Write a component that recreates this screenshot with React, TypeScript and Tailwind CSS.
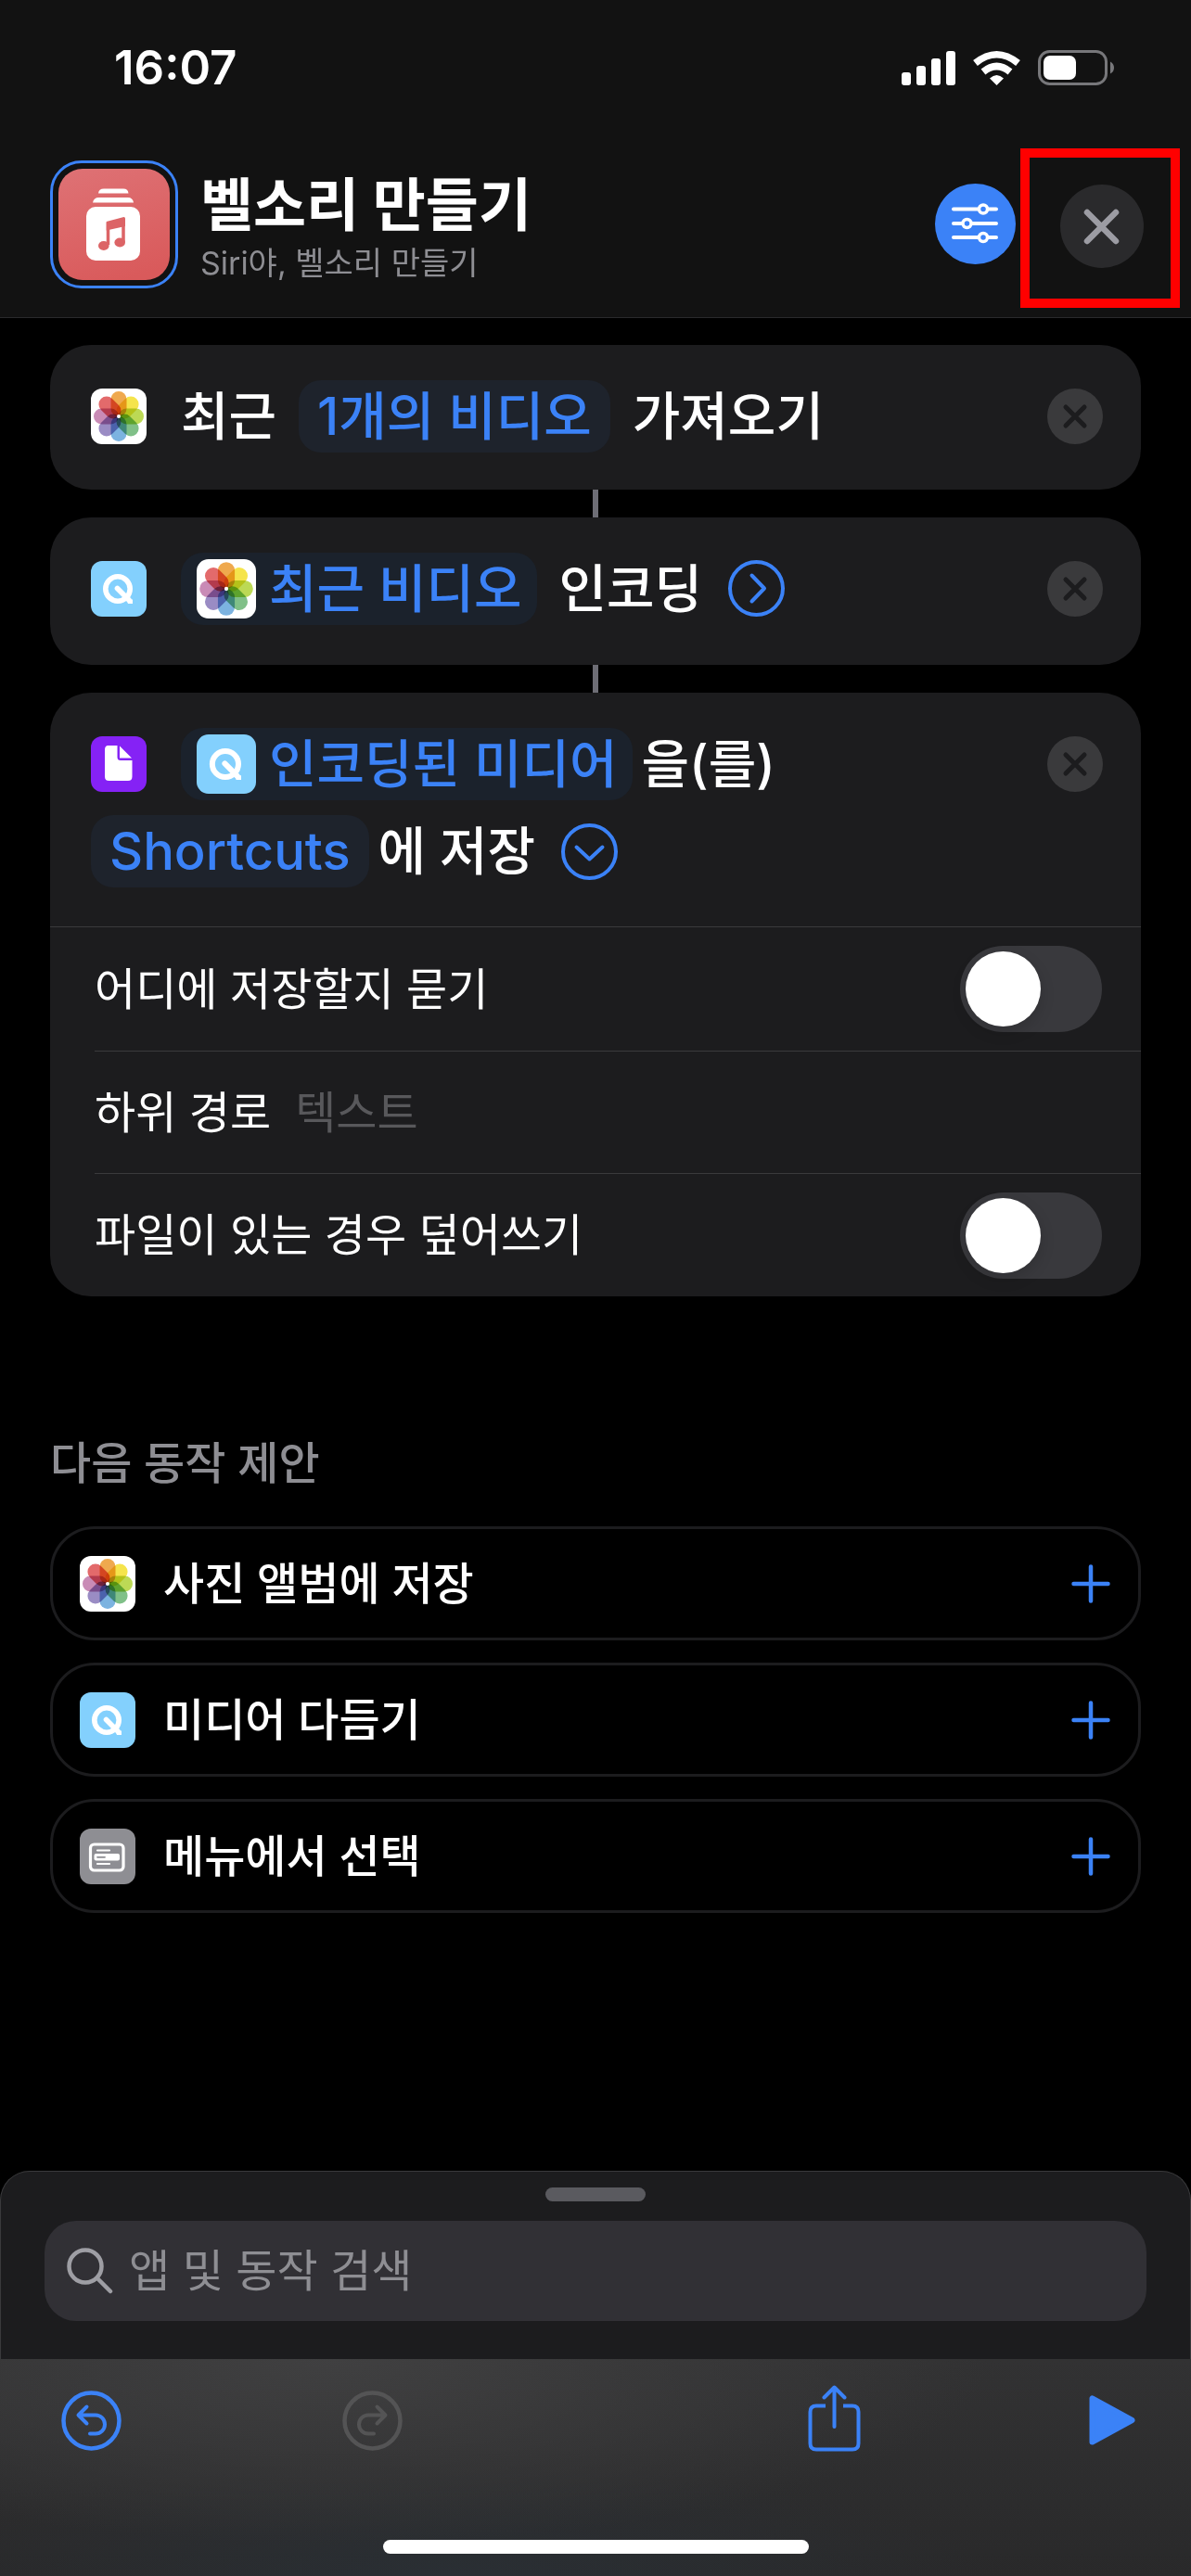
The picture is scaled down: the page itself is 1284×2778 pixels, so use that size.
import { useState } from "react";
import type { ReactNode } from "react";

const PETALS = [
  { angle: 0, color: "#efa94e" },
  { angle: 45, color: "#f5e44c" },
  { angle: 90, color: "#bcd955" },
  { angle: 135, color: "#80c088" },
  { angle: 180, color: "#7cb3e0" },
  { angle: 225, color: "#9a8cc4" },
  { angle: 270, color: "#c98bb6" },
  { angle: 315, color: "#e36a6b" },
];

const PhotosIcon = ({ className }: { className: string }) => (
  <svg viewBox="0 0 60 60" className={className} aria-hidden="true">
    <rect width="60" height="60" rx="12" fill="#fff" />
    <g className="isolate">
      {PETALS.map(({ angle, color }) => (
        <rect
          key={angle}
          x="21.5"
          y="3"
          width="17"
          height="27"
          rx="8.5"
          fill={color}
          transform={`rotate(${angle} 30 30)`}
          className="mix-blend-multiply"
        />
      ))}
    </g>
    <circle cx="30" cy="30" r="2" fill="#fff" />
  </svg>
);

const MediaIcon = ({ className }: { className: string }) => (
  <svg viewBox="0 0 60 60" className={className} fill="none" aria-hidden="true">
    <rect width="60" height="60" rx="12" fill="#83d0fd" />
    <circle cx="29" cy="30" r="13.2" stroke="#fff" strokeWidth="5.6" />
    <path d="M28.500 29.500L41 42" stroke="#fff" strokeWidth="5.6" strokeLinecap="round" />
    <path d="M38 41L45 41.500V46H40Z" fill="#fff" />
  </svg>
);

const FileIcon = ({ className }: { className: string }) => (
  <svg viewBox="0 0 60 60" className={className} aria-hidden="true">
    <rect width="60" height="60" rx="12" fill="#8522f5" />
    <path d="M18.500 10H28.500V22.500Q28.500 26 32 26H44.500V43.500Q44.500 48 40 48H19.500Q15 48 15 43.500V14.500Q15 10 18.500 10Z" fill="#fff" />
    <path d="M31 10.500L44 23.500H31Z" fill="#fff" />
  </svg>
);

const MenuIcon = ({ className }: { className: string }) => (
  <svg viewBox="0 0 60 60" className={className} fill="none" aria-hidden="true">
    <rect width="60" height="60" rx="12" fill="#8e8e93" />
    <rect x="11.500" y="17" width="35.500" height="28" rx="4" stroke="#fff" strokeWidth="3.200" />
    <path d="M19 23.500H32M19 38H32" stroke="#fff" strokeWidth="2.200" strokeLinecap="round" />
    <rect x="15.500" y="27" width="27.500" height="7.500" rx="2" fill="#fff" />
    <path d="M19 30.800H27" stroke="#8e8e93" strokeWidth="1.800" strokeLinecap="round" />
  </svg>
);

const RemoveButton = () => (
  <button type="button" aria-label="동작 제거" className="size-[60px] shrink-0 rounded-full bg-[#3a3a3c]">
    <svg viewBox="0 0 60 60" className="size-full" aria-hidden="true">
      <path d="M20 20L40 40M40 20L20 40" stroke="#1c1c1e" strokeWidth="5" strokeLinecap="round" />
    </svg>
  </button>
);

const DisclosureButton = ({ open }: { open: boolean }) => (
  <button type="button" aria-label="옵션" className="ml-[4px] size-[61px] shrink-0 text-[#3b82f7]">
    <svg
      viewBox="0 0 61 61"
      className="size-full"
      fill="none"
      stroke="currentColor"
      strokeWidth="4"
      strokeLinecap="round"
      strokeLinejoin="round"
      aria-hidden="true"
    >
      <circle cx="30.500" cy="30.500" r="28.500" />
      <path d={open ? "M16.500 25.500L30.500 38.500L44.500 25.500" : "M25.500 16.500L39 30.500L25.500 44.500"} />
    </svg>
  </button>
);

const Token = ({ icon, children }: { icon?: ReactNode; children: ReactNode }) => (
  <button
    type="button"
    className={`flex h-[78px] items-center rounded-[24px] text-[#3b82f7] ${
      icon ? "gap-[14px] bg-[#1b222c] pr-[16px] pl-[17px]" : "bg-[#1e232c] px-[20px]"
    }`}
  >
    {icon}
    {children}
  </button>
);

const Toggle = ({ id }: { id: string }) => {
  const [on, setOn] = useState(false);

  return (
    <input
      id={id}
      type="checkbox"
      role="switch"
      checked={on}
      onChange={() => setOn(!on)}
      className="h-[93px] w-[153px] shrink-0 appearance-none rounded-full bg-[#39393d] p-[6px] before:block before:size-[81px] before:rounded-full before:bg-white before:shadow-[0_6px_16px_rgba(0,0,0,0.15)] checked:bg-[#34c759] checked:before:ml-auto"
    />
  );
};

const Connector = () => <div className="mx-auto h-[30px] w-[6px] bg-[#6d6d75]" />;

const suggestions = [
  { label: "사진 앨범에 저장", Icon: PhotosIcon },
  { label: "미디어 다듬기", Icon: MediaIcon },
  { label: "메뉴에서 선택", Icon: MenuIcon },
];

const StatusBar = () => (
  <div className="flex items-center justify-between pr-[82px] pl-[123px]">
    <span className="font-['Inter'] text-[51px] leading-[60px] font-semibold">16:07</span>
    <svg viewBox="0 0 230 38" className="h-[38px] w-[230px]" aria-hidden="true">
      <g fill="#fff">
        <rect x="0" y="24" width="10" height="14" rx="3" />
        <rect x="16" y="17" width="10" height="21" rx="3" />
        <rect x="32" y="9" width="10" height="29" rx="3" />
        <rect x="48" y="1" width="10" height="37" rx="3" />
      </g>
      <g fill="none" stroke="#fff" strokeWidth="7.500">
        <path d="M79.500 14Q102.500 -4.500 125.500 14" />
        <path d="M88 23.500Q102.500 11.500 117 23.500" />
      </g>
      <path d="M95 30.500Q102.500 23.500 110 30.500L102.500 38Z" fill="#fff" />
      <rect x="148.500" y="1.500" width="72" height="35" rx="11" fill="none" stroke="#77777a" strokeWidth="3" />
      <rect x="153" y="6" width="35" height="26" rx="7" fill="#fff" />
      <path d="M225 12.500Q229 14.500 229 19Q229 23.500 225 25.500Z" fill="#77777a" />
    </svg>
  </div>
);

const Header = () => (
  <header className="border-b border-[#2a2a2c] bg-[#121212] pt-[43px] pb-[10px]">
    <StatusBar />
    <div className="mt-[57px] flex items-center pr-[12px] pl-[54px]">
      <div className="mb-[9px] size-[138px] shrink-0 rounded-[34px] border-[3px] border-[#3b82f7] p-[6px]">
        <svg viewBox="0 0 120 120" className="size-full" aria-hidden="true">
          <defs>
            <linearGradient id="ringtone" x1="0.300" y1="0" x2="0.600" y2="1">
              <stop offset="0" stopColor="#de7073" />
              <stop offset="1" stopColor="#d95a5b" />
            </linearGradient>
          </defs>
          <rect width="120" height="120" rx="26" fill="url(#ringtone)" />
          <g fill="#fff">
            <path d="M43 26.500Q43.500 21.500 49 21.500H70Q75 21.500 75.500 26.500Z" />
            <path d="M37 36.500Q38 31 43.500 31H75Q80 31 81 36.500Z" />
            <rect x="30" y="41" width="58" height="58" rx="10" />
          </g>
          <path d="M53.500 82V59.500L70 55.500V79" fill="none" stroke="#dc6466" strokeWidth="3.500" />
          <path d="M51.700 57L70.500 52Q72 52 72 54V62L51.700 66.500Z" fill="#dc6466" />
          <ellipse cx="48.800" cy="83" rx="5.800" ry="5" fill="#dc6466" />
          <ellipse cx="66.200" cy="79.500" rx="5.800" ry="5" fill="#dc6466" />
        </svg>
      </div>
      <div className="ml-[24px] flex-1">
        <h1 className="text-[62px] leading-[72px] font-bold">벨소리 만들기</h1>
        <p className="mt-[4px] text-[34px] leading-[44px] text-[#8e8e93]">Siri야, 벨소리 만들기</p>
      </div>
      <button
        type="button"
        aria-label="세부사항"
        className="mr-[5px] mb-[9px] size-[87px] rounded-full bg-[#3b82f7]"
      >
        <svg viewBox="0 0 87 87" className="size-full" fill="none" stroke="#fff" strokeWidth="4" strokeLinecap="round" aria-hidden="true">
          <path d="M20 27.500H66M20 43H66M20 58H66" />
          <g fill="#3b82f7" strokeWidth="3.500">
            <circle cx="52" cy="27.500" r="4.500" />
            <circle cx="34.500" cy="43" r="4.500" />
            <circle cx="52" cy="58" r="4.500" />
          </g>
        </svg>
      </button>
      <div className="flex size-[172px] items-center justify-center border-[10px] border-[#ff0000] pb-[4px] pl-[4px]">
        <button type="button" aria-label="닫기" className="size-[90px] rounded-full bg-[#2a2a2c]">
          <svg viewBox="0 0 90 90" className="size-full" aria-hidden="true">
            <path d="M29 30L60 61M60 30L29 61" stroke="#9c9ca3" strokeWidth="6.500" strokeLinecap="round" />
          </svg>
        </button>
      </div>
    </div>
  </header>
);

const App = () => (
  <div className="flex min-h-screen flex-col bg-black font-['Inter','Noto_Sans_CJK_KR',sans-serif] text-white">
    <Header />

    <main className="flex-1 px-[54px] pt-[29px] text-[56px] leading-[78px] font-medium">
      <section className="flex h-[156px] items-center rounded-[44px] bg-[#1c1c1e] pr-[41px] pb-[3px] pl-[44px]">
        <PhotosIcon className="size-[60px] shrink-0" />
        <div className="ml-[37px] flex flex-1 items-center gap-[24px]">
          최근 <Token>1개의 비디오</Token> 가져오기
        </div>
        <RemoveButton />
      </section>
      <Connector />

      <section className="flex h-[159px] items-center rounded-[44px] bg-[#1c1c1e] pr-[41px] pb-[6px] pl-[44px]">
        <MediaIcon className="size-[60px] shrink-0" />
        <div className="ml-[37px] flex flex-1 items-center gap-[24px]">
          <Token icon={<PhotosIcon className="size-[64px]" />}>최근 비디오</Token> 인코딩
          <DisclosureButton open={false} />
        </div>
        <RemoveButton />
      </section>
      <Connector />

      <section className="rounded-[44px] bg-[#1c1c1e]">
        <div className="pt-[38px] pr-[41px] pb-[42px] pl-[44px]">
          <div className="flex items-center">
            <FileIcon className="size-[60px] shrink-0" />
            <div className="ml-[37px] flex flex-1 items-center gap-[10px]">
              <Token icon={<MediaIcon className="size-[64px]" />}>인코딩된 미디어</Token> 을(를)
            </div>
            <RemoveButton />
          </div>
          <div className="mt-[16px] flex items-center gap-[24px]">
            <div className="flex items-center gap-[10px]">
              <Token>Shortcuts</Token> 에 저장
            </div>
            <DisclosureButton open />
          </div>
        </div>

        <div className="border-t border-[#3a3a3c] pl-[48px] text-[48px] font-normal">
          <div className="flex h-[133px] items-center justify-between pr-[42px]">
            <label htmlFor="ask">어디에 저장할지 묻기</label>
            <Toggle id="ask" />
          </div>
          <div className="flex h-[133px] items-center gap-[26px] border-y border-[#3a3a3c] pr-[42px]">
            <label htmlFor="subpath">하위 경로</label>
            <input
              id="subpath"
              type="text"
              placeholder="텍스트"
              className="min-w-0 flex-1 bg-transparent outline-none placeholder:text-[#58585b]"
            />
          </div>
          <div className="flex h-[132px] items-center justify-between pr-[42px]">
            <label htmlFor="overwrite">파일이 있는 경우 덮어쓰기</label>
            <Toggle id="overwrite" />
          </div>
        </div>
      </section>

      <h2 className="mt-[144px] text-[48px] leading-[72px] text-[#8e8e93]">다음 동작 제안</h2>
      <ul className="mt-[32px] flex flex-col gap-[24px]">
        {suggestions.map(({ label, Icon }) => (
          <li key={label}>
            <button
              type="button"
              className="flex h-[123px] w-full items-center rounded-[48px] border-[3px] border-[#1c1c1e] pr-[30px] pl-[29px] text-[48px]"
            >
              <Icon className="size-[60px]" />
              <span className="ml-[30px] flex-1 text-left">{label}</span>
              <svg viewBox="0 0 42 42" className="size-[42px]" aria-hidden="true">
                <path d="M21 2.500V39.500M2.500 21H39.500" stroke="#3b82f7" strokeWidth="4.500" strokeLinecap="round" />
              </svg>
            </button>
          </li>
        ))}
      </ul>
    </main>

    <footer>
      <div className="rounded-t-[32px] border-x border-t border-[#3a3a3c] bg-[#1c1c1e] px-[47px] pt-[17px] pb-[41px]">
        <div className="mx-auto h-[15px] w-[108px] rounded-full bg-[#5a5a5f]" />
        <label className="mt-[21px] flex h-[108px] items-center gap-[17px] rounded-[34px] bg-[#313035] px-[24px]">
          <svg viewBox="0 0 50 50" className="size-[50px]" fill="none" stroke="#9e9ea4" strokeWidth="4.500" strokeLinecap="round" aria-hidden="true">
            <circle cx="20" cy="20" r="17.500" />
            <path d="M33 33L47 47" />
          </svg>
          <input
            type="search"
            aria-label="앱 및 동작 검색"
            placeholder="앱 및 동작 검색"
            className="min-w-0 flex-1 bg-transparent text-[48px] leading-[72px] outline-none placeholder:text-[#8e8e93]"
          />
        </label>
      </div>

      <div className="bg-[radial-gradient(ellipse_55%_85%_at_28%_0%,#404041_0%,rgba(60,60,61,0.7)_45%,transparent_100%),radial-gradient(ellipse_45%_50%_at_38%_100%,#2a2f34_0%,transparent_100%),linear-gradient(#323233,#29292a)] pb-[24px]">
        <div className="flex h-[195px] items-start pt-[28px] pr-[60px] pl-[66px] text-[#3b82f7]">
          <button type="button" aria-label="실행 취소" className="mt-[6px] size-[65px]">
            <svg viewBox="0 0 65 65" className="size-full" fill="none" stroke="currentColor" strokeWidth="4.500" strokeLinecap="round" strokeLinejoin="round" aria-hidden="true">
              <circle cx="32.500" cy="32.500" r="30" />
              <path d="M27.500 17.500L18.500 26.500L27.500 35.500M19 26.500H37A10 10 0 0 1 37 46.500H31" strokeWidth="4" />
            </svg>
          </button>
          <div className="flex-[31]" />
          <button type="button" aria-label="다시 실행" disabled className="mt-[6px] size-[65px] text-[#545455]">
            <svg viewBox="0 0 65 65" className="size-full" fill="none" stroke="currentColor" strokeWidth="4.500" strokeLinecap="round" strokeLinejoin="round" aria-hidden="true">
              <circle cx="32.500" cy="32.500" r="30" />
              <path d="M37.500 17.500L46.500 26.500L37.500 35.500M46 26.500H28A10 10 0 0 0 28 46.500H34" strokeWidth="4" />
            </svg>
          </button>
          <div className="flex-[57]" />
          <button type="button" aria-label="공유" className="h-[72px] w-[57px]">
            <svg viewBox="0 0 57 72" className="size-full" fill="none" stroke="currentColor" strokeWidth="4" strokeLinecap="round" strokeLinejoin="round" aria-hidden="true">
              <path d="M19 22.500H9Q2.500 22.500 2.500 29V63Q2.500 69.500 9 69.500H48Q54.500 69.500 54.500 63V29Q54.500 22.500 48 22.500H38" strokeLinecap="butt" />
              <path d="M28.500 45V3M17.500 13.500L28.500 2.500L39.500 13.500" />
            </svg>
          </button>
          <div className="flex-[32]" />
          <button type="button" aria-label="실행" className="mt-[11px] h-[54px] w-[50px]">
            <svg viewBox="0 0 50 54" className="size-full" aria-hidden="true">
              <path d="M3.500 3.500V50.500L46.500 27Z" fill="currentColor" stroke="currentColor" strokeWidth="6" strokeLinejoin="round" />
            </svg>
          </button>
        </div>
        <div className="mx-auto h-[15px] w-[459px] rounded-full bg-white" />
      </div>
    </footer>
  </div>
);

export default App;
